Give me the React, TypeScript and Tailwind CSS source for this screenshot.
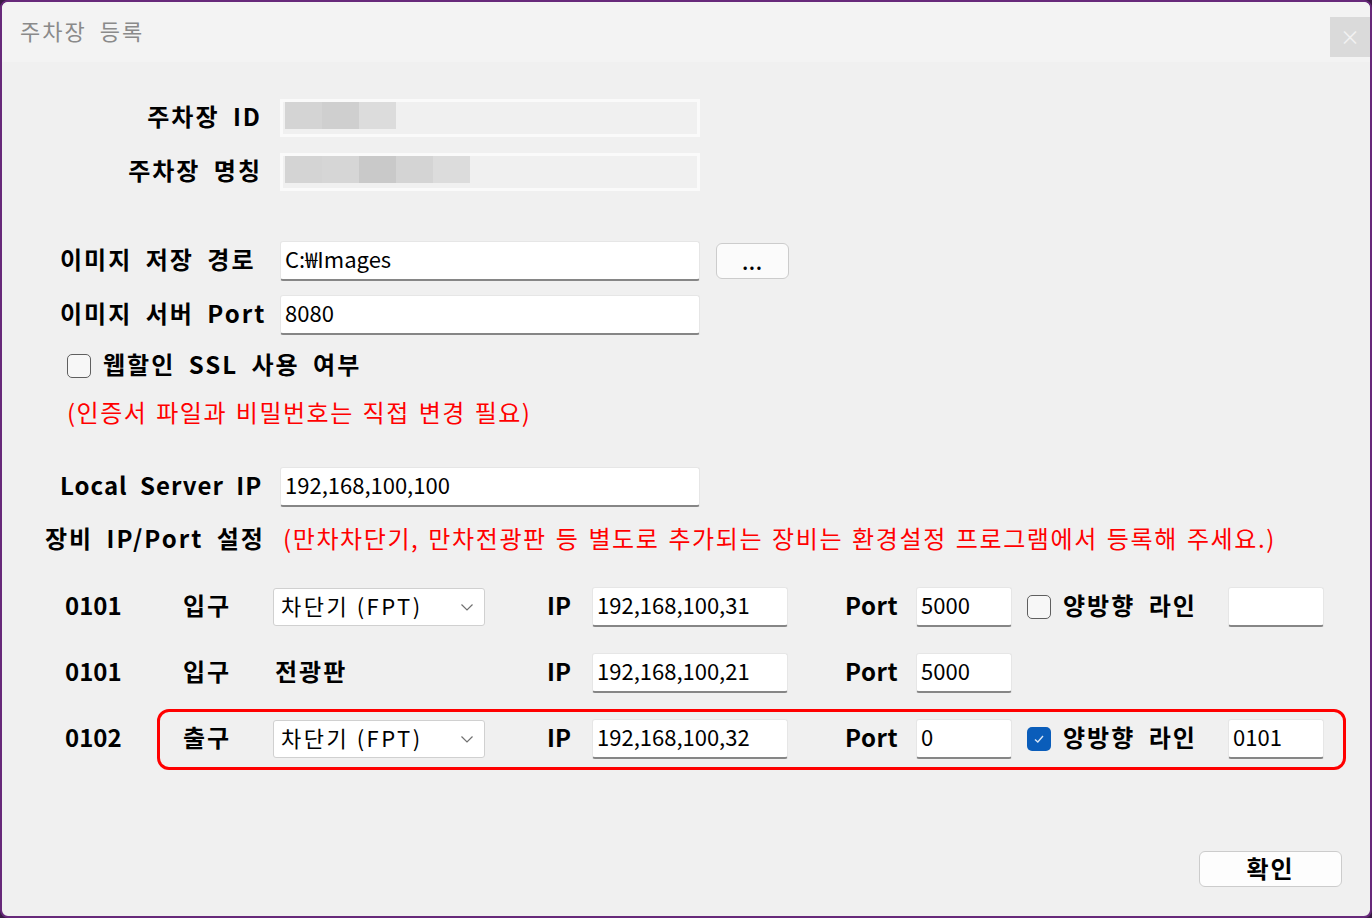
import React from "react";

const F = { fontFamily: '"Noto Sans CJK KR", "Noto Sans", sans-serif' } as const;

const LBL = "text-[24px] font-bold leading-none tracking-[2px] [word-spacing:6px] -mt-[4px]";
const LBL_LATIN = "text-[24px] font-bold leading-none -mt-[4px]";

function TextBox({ value, className = "" }: { value: string; className?: string }) {
  return (
    <div
      className={`h-[40px] bg-white border border-[#e6e6e6] border-b-[2px] border-b-[#868686] rounded-[3px] flex items-center pl-[4px] text-[22px] leading-none text-black ${className}`}
    >
      <span className="-mt-[5px]">{value}</span>
    </div>
  );
}

function ReadOnlyBox({ blocks }: { blocks: string[] }) {
  return (
    <div className="h-[38px] w-[420px] border-[3px] border-[#fafafa] bg-[#f0f0f0] relative">
      <div className="absolute left-[2px] top-[0px] flex">
        {blocks.map((c, i) => (
          <div key={i} className="w-[37px] h-[27px]" style={{ backgroundColor: c }} />
        ))}
      </div>
    </div>
  );
}

function CheckBox({ checked }: { checked?: boolean }) {
  if (checked) {
    return (
      <div className="w-[24px] h-[24px] rounded-[5px] bg-[#0a5dba] flex items-center justify-center">
        <svg width="14" height="14" viewBox="0 0 14 14">
          <path d="M3 7.5 L5.8 10 L11 4" stroke="#d9e6f5" strokeWidth="1.4" fill="none" />
        </svg>
      </div>
    );
  }
  return <div className="w-[24px] h-[24px] rounded-[5px] border-[1.5px] border-[#5f5f5f] bg-[#f7f7f7]" />;
}

function Select() {
  return (
    <div className="w-[212px] h-[38px] bg-white border border-[#d0d0d0] rounded-[3px] flex items-center pl-[7px] pr-[10px] justify-between">
      <span className="text-[22px] leading-none text-black -mt-[4px] tracking-[2.5px]">차단기 (FPT)</span>
      <svg width="14" height="9" viewBox="0 0 14 9">
        <path d="M1.5 1.5 L7 7 L12.5 1.5" stroke="#707070" strokeWidth="1.2" fill="none" />
      </svg>
    </div>
  );
}

function DeviceRow({
  code,
  kind,
  select,
  ip,
  port,
  line,
  checked,
  highlight,
}: {
  code: string;
  kind: string;
  select: boolean;
  ip: string;
  port: string;
  line?: string;
  checked?: boolean;
  highlight?: boolean;
}) {
  return (
    <div className="relative flex items-center h-[40px] pl-[63px]">
      {highlight && (
        <div className="absolute left-[155px] top-[-10px] w-[1189px] h-[61px] border-[3px] border-[#ff0000] rounded-[12px] pointer-events-none" />
      )}
      <div className={`w-[118px] ${LBL_LATIN}`}>{code}</div>
      <div className={`w-[90px] ${LBL}`}>{kind}</div>
      <div className="w-[274px]">
        {select ? <Select /> : <div className={`pl-[2px] ${LBL}`}>전광판</div>}
      </div>
      <div className={`w-[45px] ${LBL_LATIN}`}>IP</div>
      <TextBox value={ip} className="w-[196px]" />
      <div className="w-[57px]" />
      <div className={`w-[71px] ${LBL_LATIN} tracking-[0.5px]`}>Port</div>
      <TextBox value={port} className="w-[96px]" />
      {line !== undefined && (
        <>
          <div className="w-[15px]" />
          <CheckBox checked={checked} />
          <div className={`w-[177px] pl-[12px] ${LBL}`}>양방향 라인</div>
          <TextBox value={line} className="w-[96px]" />
        </>
      )}
    </div>
  );
}

export default function App() {
  return (
    <div className="w-[1372px] h-[918px] bg-[#3a1b45]" style={F}>
      <div className="w-[1372px] h-[918px] border-[2px] border-[#67297a] rounded-[8px] overflow-hidden flex flex-col bg-[#f0f0f0] text-black">
        {/* Title bar */}
        <div className="h-[60px] bg-[#f3f3f3] flex items-start justify-between shrink-0">
          <div className="pl-[18px] pt-[17px] text-[22px] leading-none text-[#8a8a8a] tracking-[2px] [word-spacing:6px]">
            주차장 등록
          </div>
          <div className="mt-[15px] w-[40px] h-[40px] bg-[#dadada] flex items-center justify-center text-[20px] text-[#f2f2f2] leading-none">
            ×
          </div>
        </div>

        {/* Content */}
        <div className="flex flex-col">
          <div className="mt-[37px] flex items-center h-[38px]">
            <div className={`w-[278px] pr-[18px] text-right ${LBL}`}>주차장 ID</div>
            <ReadOnlyBox blocks={["#d4d4d4", "#cfcfcf", "#dcdcdc"]} />
          </div>
          <div className="mt-[16px] flex items-center h-[38px]">
            <div className={`w-[278px] pr-[18px] text-right ${LBL}`}>주차장 명칭</div>
            <ReadOnlyBox blocks={["#d4d4d4", "#d6d6d6", "#c9c9c9", "#d4d4d4", "#dcdcdc"]} />
          </div>

          <div className="mt-[50px] flex items-center h-[40px]">
            <div className={`w-[278px] pl-[58px] ${LBL}`}>이미지 저장 경로</div>
            <TextBox value="C:₩Images" className="w-[420px]" />
            <div className="ml-[16px] w-[73px] h-[36px] bg-[#fbfbfb] border border-[#cccccc] rounded-[6px] flex items-center justify-center text-[18px] leading-none">
              <span className="mt-[2px] font-bold tracking-[1px]">...</span>
            </div>
          </div>
          <div className="mt-[14px] flex items-center h-[40px]">
            <div className={`w-[278px] pl-[58px] ${LBL}`}>이미지 서버 Port</div>
            <TextBox value="8080" className="w-[420px]" />
          </div>

          <div className="mt-[16px] flex items-center h-[30px] pl-[65px]">
            <CheckBox />
            <div className={`ml-[12px] ${LBL}`}>웹할인 SSL 사용 여부</div>
          </div>
          <div className="mt-[18px] flex items-center h-[30px] pl-[65px] text-[24px] leading-none text-[#ff0000] tracking-[1.5px] [word-spacing:2px]">
            <span className="-mt-[4px]">(인증서 파일과 비밀번호는 직접 변경 필요)</span>
          </div>

          <div className="mt-[38px] flex items-center h-[40px]">
            <div className="w-[278px] pl-[58px] text-[24px] font-bold leading-none tracking-[1px] [word-spacing:6px] -mt-[4px]">
              Local Server IP
            </div>
            <TextBox value="192,168,100,100" className="w-[420px]" />
          </div>

          <div className="mt-[18px] flex items-center h-[30px]">
            <div className={`w-[281px] pl-[43px] ${LBL}`}>장비 IP/Port 설정</div>
            <div className="text-[24px] leading-none text-[#ff0000] tracking-[1.6px] [word-spacing:2px] -mt-[4px]">
              (만차차단기, 만차전광판 등 별도로 추가되는 장비는 환경설정 프로그램에서 등록해 주세요.)
            </div>
          </div>

          <div className="mt-[32px]">
            <DeviceRow code="0101" kind="입구" select ip="192,168,100,31" port="5000" line="" />
          </div>
          <div className="mt-[26px]">
            <DeviceRow code="0101" kind="입구" select={false} ip="192,168,100,21" port="5000" />
          </div>
          <div className="mt-[26px]">
            <DeviceRow code="0102" kind="출구" select ip="192,168,100,32" port="0" line="0101" checked highlight />
          </div>

          <div className="mt-[92px] flex justify-end pr-[28px]">
            <div className="w-[143px] h-[36px] bg-[#fdfdfd] border border-[#cccccc] rounded-[6px] flex items-center justify-center text-[24px] font-bold leading-none tracking-[2px]">
              <span className="-mt-[3px]">확인</span>
            </div>
          </div>
        </div>
      </div>
    </div>
  );
}
